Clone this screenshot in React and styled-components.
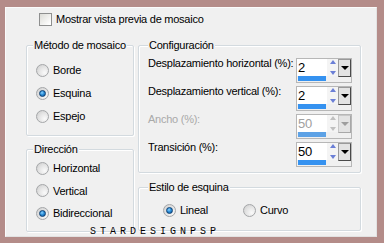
import React from 'react';
import styled, { createGlobalStyle, css } from 'styled-components';

const GlobalStyle = createGlobalStyle`
  html, body {
    margin: 0;
    padding: 0;
    background: #b48c89;
  }
  body {
    font-family: "Liberation Sans", Arial, sans-serif;
    font-size: 11px;
    letter-spacing: -0.25px;
    color: #000;
  }
`;

const panelBg = '#f0f0f0';

const Frame = styled.div`
  width: 384px;
  height: 243px;
  box-sizing: border-box;
  padding: 7px 7px 6px 5px;
  background: #b48c89;
`;

const Panel = styled.div`
  position: relative;
  box-sizing: border-box;
  height: 100%;
  background: ${panelBg};
  border: 1px solid #fbfbfb;
  border-right-color: #e2e2e2;
  border-bottom-color: #e2e2e2;
  padding: 5px 0 0 20px;
`;

const CheckRow = styled.label`
  display: flex;
  align-items: center;
  gap: 4px;
  height: 13px;
  margin-left: 13px;
  line-height: 13px;
`;

const CheckBox = styled.span`
  width: 11px;
  height: 11px;
  border: 1px solid #8e8f8f;
  background: linear-gradient(135deg, #dcdcd7 0%, #fff 90%);
`;

const Columns = styled.div`
  display: flex;
  gap: 4px;
  margin-top: 19px;
`;

const Column = styled.div`
  display: flex;
  flex-direction: column;
  width: ${p => p.$w}px;
  gap: ${p => p.$gap}px;
`;

const Group = styled.div`
  box-sizing: border-box;
  height: ${p => p.$h}px;
  border: 1px solid #d3dadf;
  border-radius: 2px;
  box-shadow: inset 1px 1px 0 #fff, 1px 1px 0 #fff;
  padding: 0 0 0 ${p => p.$pad ?? 9}px;
`;

const Title = styled.div`
  width: max-content;
  margin: -7px 0 0 ${p => p.$offset}px;
  padding: 0 1px;
  height: 13px;
  line-height: 13px;
  background: ${panelBg};
`;

const RadioList = styled.div`
  display: flex;
  flex-direction: ${p => (p.$row ? 'row' : 'column')};
  gap: ${p => p.$gap || 0}px;
  padding-top: ${p => p.$top}px;
  padding-left: ${p => p.$left || 0}px;
`;

const RadioRow = styled.div`
  display: flex;
  align-items: center;
  gap: 4px;
  height: 22px;
  width: ${p => (p.$w ? `${p.$w}px` : 'auto')};
`;

const RadioDot = styled.span`
  position: relative;
  box-sizing: border-box;
  width: 13px;
  height: 13px;
  border-radius: 50%;
  border: 1px solid #a4a6a8;
  background: radial-gradient(circle at 70% 70%, #fafafa 0%, #e2e2e2 55%, #c9c9c9 100%);
  ${p =>
    p.$on &&
    css`
      &::after {
        content: '';
        position: absolute;
        left: 2px;
        top: 2px;
        width: 7px;
        height: 7px;
        box-sizing: border-box;
        border-radius: 50%;
        border: 1px solid #0c3f73;
        background: radial-gradient(circle at 40% 35%, #8fd3ff 0%, #2a8ed8 45%, #0b4f93 100%);
      }
    `}
`;

const FieldList = styled.div`
  display: flex;
  flex-direction: column;
  gap: 3px;
  padding-top: 4px;
`;

const FieldRow = styled.div`
  display: flex;
  align-items: flex-start;
  height: 25px;
`;

const FieldLabel = styled.div`
  width: 148px;
  padding-top: 1px;
  line-height: 13px;
  color: ${p => (p.$disabled ? '#a9a9a9' : '#000')};
`;

const Spin = styled.div`
  display: flex;
  box-sizing: border-box;
  width: 56px;
  height: 25px;
  margin-top: 2px;
  border: 1px solid #b7b7b7;
  background: ${panelBg};
`;

const EditCol = styled.div`
  display: flex;
  flex-direction: column;
  width: 30px;
`;

const Edit = styled.div`
  height: 17px;
  background: #fff;
  font-size: 13px;
  line-height: 17px;
  padding-left: 1px;
  color: ${p => (p.$disabled ? '#a0a0a0' : '#000')};
`;

const Bar = styled.div`
  height: 5px;
  width: 28px;
  margin-left: 1px;
  background: ${p => (p.$disabled ? '#5da2e6' : '#3592f0')};
`;

const Arrows = styled.div`
  display: flex;
  flex-direction: column;
  justify-content: space-between;
  align-items: center;
  width: 11px;
  height: 17px;
  padding: 1px 0;
  box-sizing: border-box;
  background: #f4f4f4;
`;

const Tri = styled.span`
  width: 0;
  height: 0;
  border-left: 3px solid transparent;
  border-right: 3px solid transparent;
  ${p =>
    p.$up
      ? css`border-bottom: 4px solid ${p.$disabled ? '#c0c0c0' : '#6b7fd6'};`
      : css`border-top: 4px solid ${p.$disabled ? '#c0c0c0' : '#6b7fd6'};`}
`;

const DropButton = styled.div`
  display: flex;
  align-items: center;
  justify-content: center;
  box-sizing: border-box;
  width: 13px;
  height: 18px;
  border: 1px solid ${p => (p.$disabled ? '#a8a8a8' : '#4a4a4a')};
  border-top-color: ${p => (p.$disabled ? '#c8c8c8' : '#9a9a9a')};
  border-left-color: ${p => (p.$disabled ? '#c8c8c8' : '#9a9a9a')};
  background: #e3e3e3;
  &::after {
    content: '';
    border-left: 4px solid transparent;
    border-right: 4px solid transparent;
    border-top: 4px solid ${p => (p.$disabled ? '#9d9d9d' : '#000')};
  }
`;

const Watermark = styled.div`
  position: absolute;
  left: 84px;
  top: 219px;
  font-family: "Liberation Mono", monospace;
  font-size: 10px;
  line-height: 10px;
  letter-spacing: 4px;
  color: #000;
`;

const Radio = ({ label, on, w }) => (
  <RadioRow $w={w}>
    <RadioDot $on={on} />
    <span>{label}</span>
  </RadioRow>
);

const SpinField = ({ label, value, disabled }) => (
  <FieldRow>
    <FieldLabel $disabled={disabled}>{label}</FieldLabel>
    <Spin>
      <EditCol>
        <Edit $disabled={disabled}>{value}</Edit>
        <Bar $disabled={disabled} />
      </EditCol>
      <Arrows>
        <Tri $up $disabled={disabled} />
        <Tri $disabled={disabled} />
      </Arrows>
      <DropButton $disabled={disabled} />
    </Spin>
  </FieldRow>
);

export default function App() {
  return (
    <>
      <GlobalStyle />
      <Frame>
        <Panel>
          <CheckRow>
            <CheckBox />
            <span>Mostrar vista previa de mosaico</span>
          </CheckRow>
          <Columns>
            <Column $w={108} $gap={13}>
              <Group $h={91} $pad={9}>
                <Title $offset={-3}>Método de mosaico</Title>
                <RadioList $top={7} $gap={1}>
                  <Radio label="Borde" />
                  <Radio label="Esquina" on />
                  <Radio label="Espejo" />
                </RadioList>
              </Group>
              <Group $h={83} $pad={9}>
                <Title $offset={-3}>Dirección</Title>
                <RadioList $top={1} $gap={0.5}>
                  <Radio label="Horizontal" />
                  <Radio label="Vertical" />
                  <Radio label="Bidireccional" on />
                </RadioList>
              </Group>
            </Column>
            <Column $w={223} $gap={14}>
              <Group $h={128} $pad={9}>
                <Title $offset={0}>Configuración</Title>
                <FieldList>
                  <SpinField label="Desplazamiento horizontal (%):" value="2" />
                  <SpinField label="Desplazamiento vertical (%):" value="2" />
                  <SpinField label="Ancho (%):" value="50" disabled />
                  <SpinField label="Transición (%):" value="50" />
                </FieldList>
              </Group>
              <Group $h={44} $pad={0}>
                <Title $offset={9}>Estilo de esquina</Title>
                <RadioList $row $top={5} $left={24}>
                  <Radio label="Lineal" on w={80} />
                  <Radio label="Curvo" />
                </RadioList>
              </Group>
            </Column>
          </Columns>
          <Watermark>STARDESIGNPSP</Watermark>
        </Panel>
      </Frame>
    </>
  );
}
